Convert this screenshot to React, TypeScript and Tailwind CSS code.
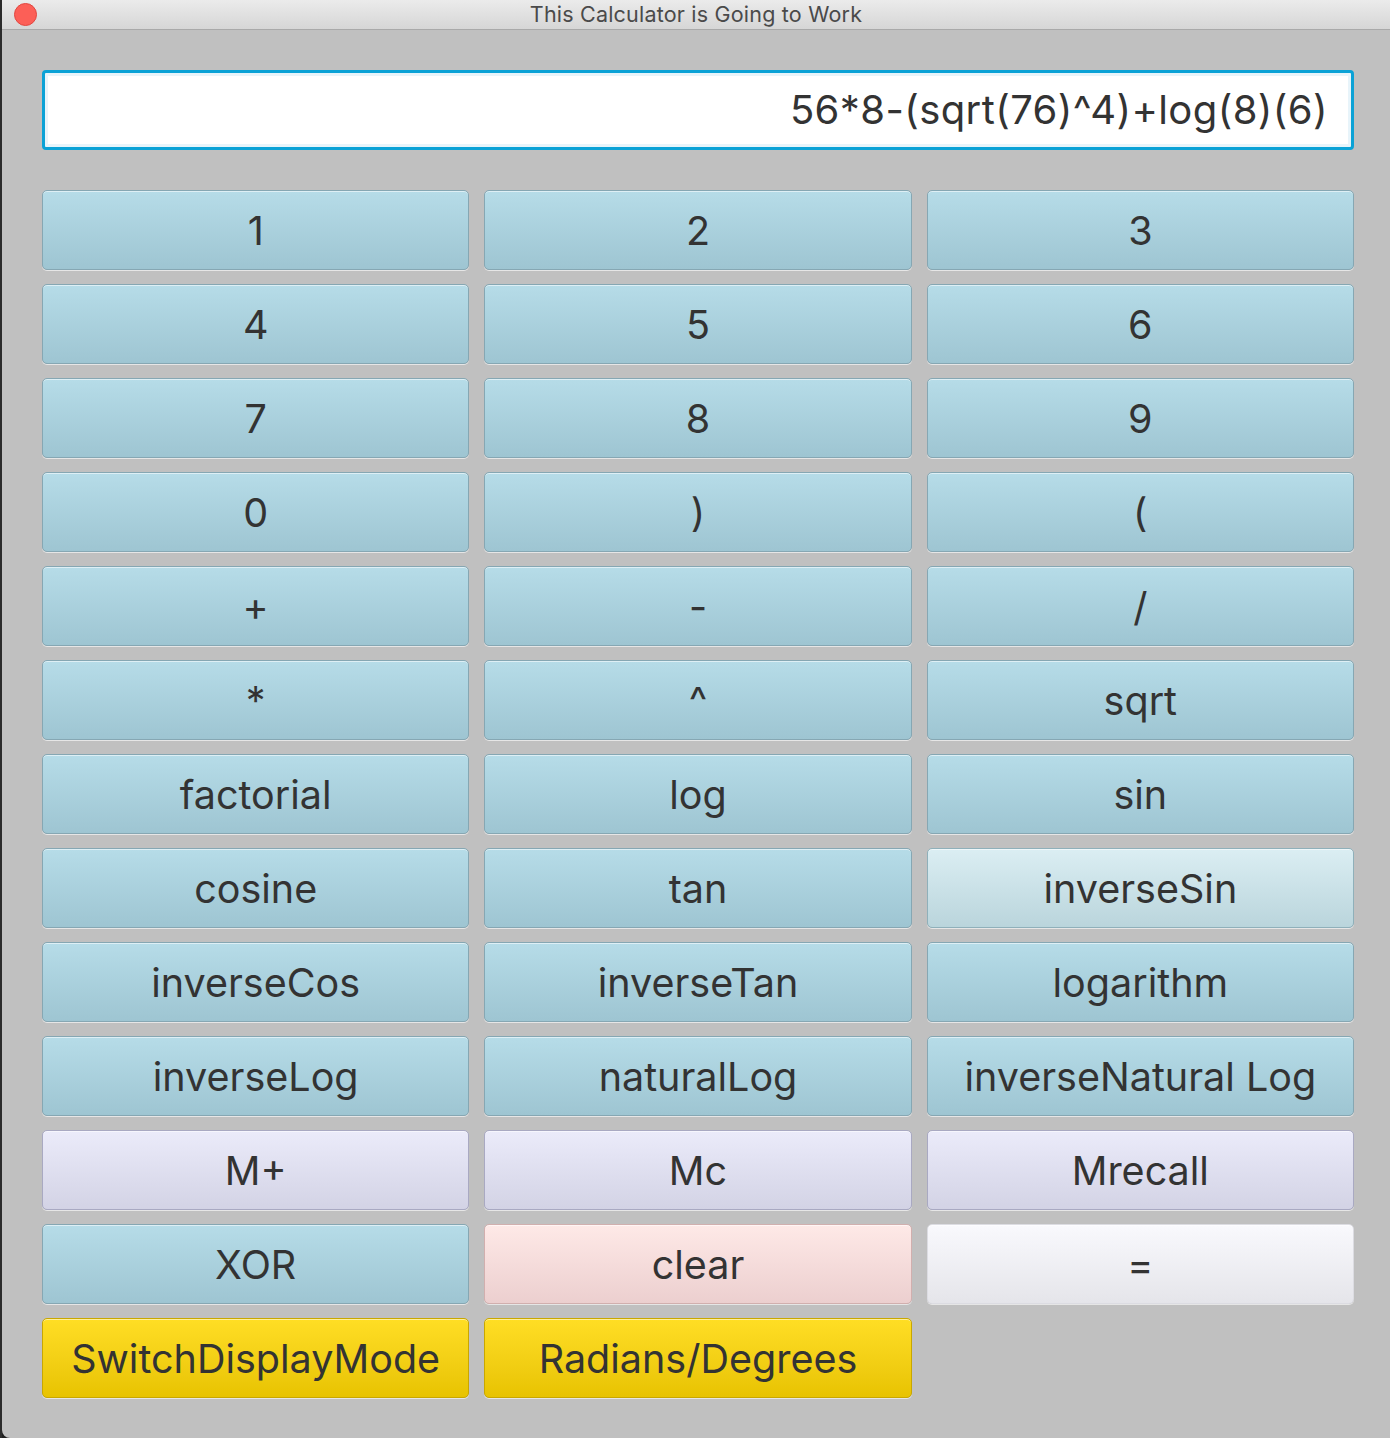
import React from "react";

type Kind = "blue" | "blueLight" | "purple" | "pink" | "white" | "yellow";

const kindClass: Record<Kind, string> = {
  blue: "bg-gradient-to-b from-[#b6dce8] to-[#9ec5d2] border-[#86a7b3]",
  blueLight: "bg-gradient-to-b from-[#dbeef3] to-[#bad5dc] border-[#8fb0ba]",
  purple: "bg-gradient-to-b from-[#ebebfa] to-[#d3d3e5] border-[#a9a9c2]",
  pink: "bg-gradient-to-b from-[#fee9e7] to-[#eccfcf] border-[#d1afae]",
  white: "bg-gradient-to-b from-[#f9f9fd] to-[#e5e5ea] border-[#dcdce2]",
  yellow: "bg-gradient-to-b from-[#ffde24] to-[#e8c300] border-[#c9a700]",
};

const buttons: [string, Kind][] = [
  ["1", "blue"], ["2", "blue"], ["3", "blue"],
  ["4", "blue"], ["5", "blue"], ["6", "blue"],
  ["7", "blue"], ["8", "blue"], ["9", "blue"],
  ["0", "blue"], [")", "blue"], ["(", "blue"],
  ["+", "blue"], ["-", "blue"], ["/", "blue"],
  ["*", "blue"], ["^", "blue"], ["sqrt", "blue"],
  ["factorial", "blue"], ["log", "blue"], ["sin", "blue"],
  ["cosine", "blue"], ["tan", "blue"], ["inverseSin", "blueLight"],
  ["inverseCos", "blue"], ["inverseTan", "blue"], ["logarithm", "blue"],
  ["inverseLog", "blue"], ["naturalLog", "blue"], ["inverseNatural Log", "blue"],
  ["M+", "purple"], ["Mc", "purple"], ["Mrecall", "purple"],
  ["XOR", "blue"], ["clear", "pink"], ["=", "white"],
  ["SwitchDisplayMode", "yellow"], ["Radians/Degrees", "yellow"],
];

function CalcButton({ label, kind }: { label: string; kind: Kind }) {
  return (
    <button
      className={`h-[80px] pt-[4px] rounded-[5px] border flex items-center justify-center text-[39.5px] leading-none text-[#333333] shadow-[inset_0_1px_0_rgba(255,255,255,0.55),0_1px_0_rgba(255,255,255,0.6)] ${kindClass[kind]}`}
    >
      {label}
    </button>
  );
}

export default function App() {
  return (
    <div
      className="w-[1390px] h-[1438px] flex bg-[#1e1e1e] overflow-hidden"
      style={{ fontFamily: "Inter, 'Noto Sans', sans-serif" }}
    >
      <div className="w-[2px] shrink-0 bg-[#2b2b2b]" />
      <div className="flex-1 flex flex-col bg-[#c0c0c0] rounded-bl-[8px]">
        <div className="h-[30px] shrink-0 relative flex items-center justify-center bg-gradient-to-b from-[#ebebeb] to-[#d6d6d6] border-b border-[#a9a9a9]">
          <div className="absolute left-[12px] top-[3px] w-[23px] h-[23px] rounded-full bg-[#fc5f57] border border-[#e2463f]" />
          <span className="text-[21.5px] text-[#4a4a4a] tracking-[0.2px]">This Calculator is Going to Work</span>
        </div>
        <div className="flex-1 pl-[40px] pr-[36px] pt-[40px]">
          <div className="h-[80px] rounded-[4px] border-[3px] border-[#0ba2d6] bg-white shadow-[inset_0_0_0_3px_#e8f4fa] flex items-center justify-end pr-[23px]">
            <span className="text-[40px] text-[#333333] tracking-[0.4px]">56*8-(sqrt(76)^4)+log(8)(6)</span>
          </div>
          <div className="mt-[40px] grid grid-cols-3 gap-x-[15px] gap-y-[14px]">
            {buttons.map(([l, k], i) => (
              <CalcButton key={i} label={l} kind={k} />
            ))}
          </div>
        </div>
      </div>
    </div>
  );
}
